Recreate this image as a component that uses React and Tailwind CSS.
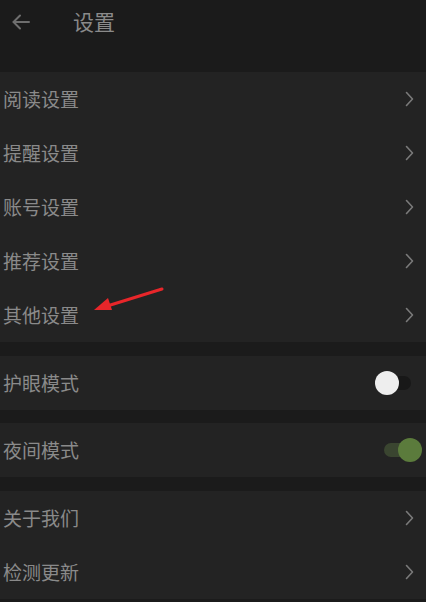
const font = { fontFamily: '"Noto Sans CJK SC", "Noto Sans", sans-serif' };

function Chevron() {
  return (
    <svg width="9" height="16" viewBox="0 0 9 16" fill="none" stroke="#7a7a7a" strokeWidth="1.6" strokeLinecap="round" strokeLinejoin="round">
      <path d="M1.5 1.5L7.5 8L1.5 14.5" />
    </svg>
  );
}

function Row({ label, children }) {
  return (
    <div className="flex h-[54px] items-center justify-between pl-[3px] pr-[12px]">
      <span className="text-[19px] text-[#8a8a8a]">{label}</span>
      {children ?? <Chevron />}
    </div>
  );
}

export default function App() {
  return (
    <div className="relative h-[602px] w-[426px] overflow-hidden bg-[#1b1b1b]" style={font}>
      <div className="flex h-[44px] items-center">
        <svg width="20" height="20" viewBox="0 0 20 20" className="ml-[11px]" fill="none" stroke="#6e6e6e" strokeWidth="2" strokeLinecap="round">
          <path d="M18 10H3M9 3.5L2.5 10 9 16.5" />
        </svg>
        <span className="ml-[42px] text-[21px] text-[#8a8a8a]">设置</span>
      </div>
      <div className="h-[28px]" />
      <div className="bg-[#232323]">
        <Row label="阅读设置" />
        <Row label="提醒设置" />
        <Row label="账号设置" />
        <Row label="推荐设置" />
        <Row label="其他设置" />
      </div>
      <div className="h-[14px]" />
      <div className="bg-[#232323]">
        <Row label="护眼模式">
          <div className="relative mr-[3px] h-[24px] w-[36px]">
            <div className="absolute top-[5px] left-[4px] h-[14px] w-[32px] rounded-full bg-[#181818]" />
            <div className="absolute top-0 left-0 h-[24px] w-[24px] rounded-full bg-[#eeeeee]" />
          </div>
        </Row>
      </div>
      <div className="h-[13px]" />
      <div className="bg-[#232323]">
        <Row label="夜间模式">
          <div className="relative mr-[-8px] h-[24px] w-[40px]">
            <div className="absolute top-[5px] left-[2px] h-[14px] w-[26px] rounded-full bg-[#3a4530]" />
            <div className="absolute top-0 left-[16px] h-[24px] w-[24px] rounded-full bg-[#5b7b3c]" />
          </div>
        </Row>
      </div>
      <div className="h-[14px]" />
      <div className="bg-[#232323]">
        <Row label="关于我们" />
        <Row label="检测更新" />
      </div>

      <svg className="absolute left-[88px] top-[282px]" width="80" height="34" viewBox="0 0 80 34">
        <path d="M74 7L16 25" stroke="#e8262a" strokeWidth="3" strokeLinecap="round" />
        <path d="M6 28L20 16L24 28Z" fill="#e8262a" />
      </svg>
    </div>
  );
}
